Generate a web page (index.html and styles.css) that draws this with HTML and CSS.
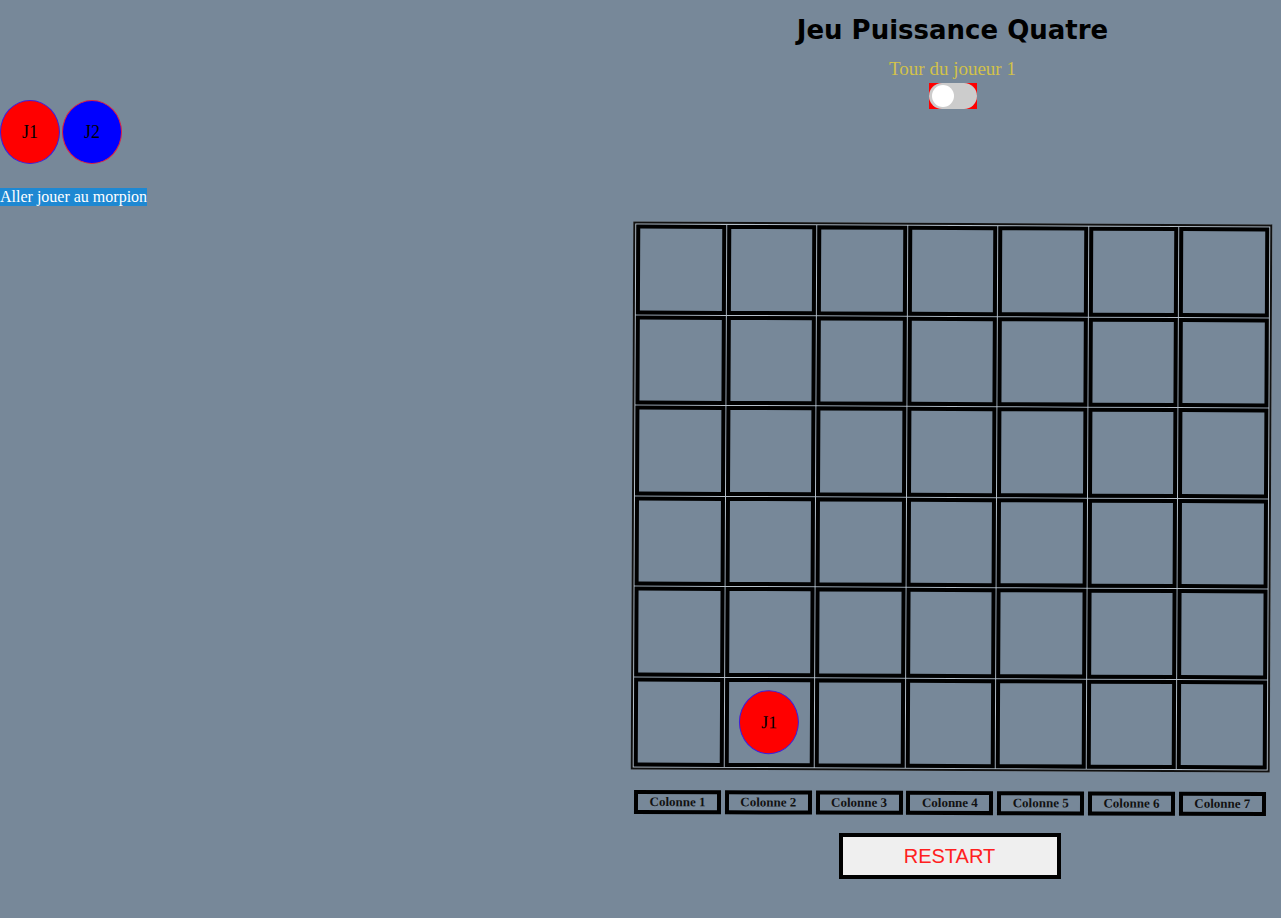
FILE: index.html
```html
<!DOCTYPE html>
<html lang="fr">
<head>
<meta charset="utf-8">
<title>Jeu Puissance Quatre</title>
<link rel="stylesheet" href="styles.css">
</head>
<body>
<div class="page">
  <div class="left">
    <div class="players">
      <div class="piece red">J1</div>
      <div class="piece blue">J2</div>
    </div>
    <a class="link" href="#">Aller jouer au morpion</a>
  </div>
  <div class="right">
    <h1 class="title">Jeu Puissance Quatre</h1>
    <div class="turn">Tour du joueur 1</div>
    <div class="toggle"><span class="pill"><span class="knob"></span></span></div>
    <table class="board">
      <tr><td><div class="cell"></div></td><td><div class="cell"></div></td><td><div class="cell"></div></td><td><div class="cell"></div></td><td><div class="cell"></div></td><td><div class="cell"></div></td><td><div class="cell"></div></td></tr>
      <tr><td><div class="cell"></div></td><td><div class="cell"></div></td><td><div class="cell"></div></td><td><div class="cell"></div></td><td><div class="cell"></div></td><td><div class="cell"></div></td><td><div class="cell"></div></td></tr>
      <tr><td><div class="cell"></div></td><td><div class="cell"></div></td><td><div class="cell"></div></td><td><div class="cell"></div></td><td><div class="cell"></div></td><td><div class="cell"></div></td><td><div class="cell"></div></td></tr>
      <tr><td><div class="cell"></div></td><td><div class="cell"></div></td><td><div class="cell"></div></td><td><div class="cell"></div></td><td><div class="cell"></div></td><td><div class="cell"></div></td><td><div class="cell"></div></td></tr>
      <tr><td><div class="cell"></div></td><td><div class="cell"></div></td><td><div class="cell"></div></td><td><div class="cell"></div></td><td><div class="cell"></div></td><td><div class="cell"></div></td><td><div class="cell"></div></td></tr>
      <tr><td><div class="cell"></div></td><td><div class="cell"><div class="piece red">J1</div></div></td><td><div class="cell"></div></td><td><div class="cell"></div></td><td><div class="cell"></div></td><td><div class="cell"></div></td><td><div class="cell"></div></td></tr>
    </table>
    <div class="columns">
      <button class="col">Colonne 1</button>
      <button class="col">Colonne 2</button>
      <button class="col">Colonne 3</button>
      <button class="col">Colonne 4</button>
      <button class="col">Colonne 5</button>
      <button class="col">Colonne 6</button>
      <button class="col">Colonne 7</button>
    </div>
    <button class="restart">RESTART</button>
  </div>
</div>
</body>
</html>
```
FILE: styles.css
```css
html, body {
  margin: 0;
  padding: 0;
  background: #778899;
  font-family: "Liberation Serif", serif;
  height: 100%;
}

.page {
  display: grid;
  grid-template-columns: 624px 1fr;
  min-height: 918px;
}

.left {
  padding-top: 100px;
}

.players {
  display: flex;
  gap: 2px;
}

.piece {
  box-sizing: border-box;
  width: 60px;
  height: 64px;
  border-radius: 50%;
  display: flex;
  align-items: center;
  justify-content: center;
  font-size: 18px;
  color: #000;
}

.piece.red {
  background: #ff0000;
  border: 1px solid #3a20e0;
}

.piece.blue {
  background: #0000ff;
  border: 1px solid #e02040;
}

.link {
  display: inline-block;
  margin-top: 24px;
  background: #1e88d2;
  color: #ffffff;
  font-size: 16px;
  line-height: 18px;
  text-decoration: none;
}

.right {
  display: flex;
  flex-direction: column;
  align-items: center;
}

.title {
  margin: 15px 0 0;
  font-family: "DejaVu Sans", sans-serif;
  font-weight: bold;
  font-size: 26px;
  line-height: 30px;
  color: #000;
}

.turn {
  margin-top: 13px;
  font-size: 19px;
  line-height: 22px;
  color: #d2c24a;
}

.toggle {
  margin-top: 3px;
  width: 48px;
  height: 26px;
  background: #ff0000;
}

.pill {
  display: block;
  width: 48px;
  height: 26px;
  border-radius: 13px;
  background: #cccccc;
  position: relative;
}

.knob {
  position: absolute;
  left: 3px;
  top: 2px;
  width: 22px;
  height: 22px;
  border-radius: 50%;
  background: #ffffff;
}

.board {
  margin-top: 114px;
  margin-right: 2px;
  border: 2px solid #111;
  border-spacing: 1px;
  background: #b4bec8;
  transform: rotate(0.27deg);
}

.board td {
  padding: 0;
  background: #778899;
}

.cell {
  width: 81.5px;
  height: 81.5px;
  border: 4px solid #000;
  display: flex;
  align-items: center;
  justify-content: center;
}

.columns {
  margin-top: 20px;
  margin-right: 6px;
  display: flex;
  gap: 3.8px;
  transform: rotate(0.18deg);
}

.col {
  box-sizing: border-box;
  width: 87px;
  height: 24px;
  border: 4px solid #000;
  background: #778899;
  font-family: "Liberation Serif", serif;
  font-weight: bold;
  font-size: 13px;
  color: #111;
  padding: 0;
}

.restart {
  box-sizing: border-box;
  margin-top: 18px;
  margin-right: 6px;
  width: 222px;
  height: 46px;
  border: 4px solid #000;
  background: #efefef;
  color: #ff2020;
  font-family: "Liberation Sans", sans-serif;
  font-size: 20px;
  padding: 0;
}
```
